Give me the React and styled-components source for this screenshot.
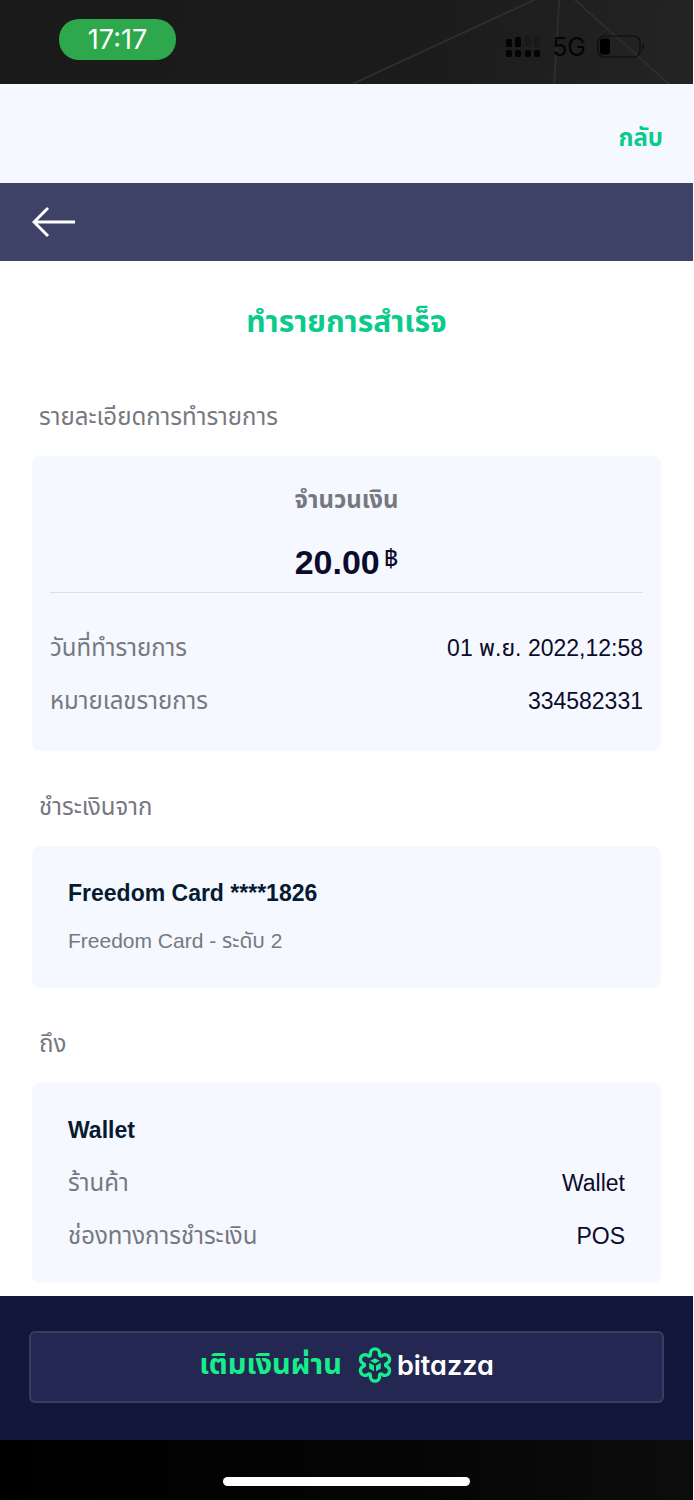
import React from "react";
import styled, { createGlobalStyle } from "styled-components";

const latin = `"Liberation Sans"`;
const thai = `"Noto Sans Thai", "Noto Sans Thai UI", "Loma", "Noto Sans"`;

const GlobalStyle = createGlobalStyle`
  * { box-sizing: border-box; }
  body {
    margin: 0;
    background: #fff;
    color: #0b0b2b;
    font-family: ${latin}, ${thai}, sans-serif;
    font-size: 23px;
    line-height: 32px;
  }
  h1, h2, h3, p, dl, dd { margin: 0; }
`;

const Page = styled.div`
  min-height: 100vh;
  display: flex;
  flex-direction: column;
  border-right: 1px solid #fff;
`;

const StatusBar = styled.header`
  position: relative;
  height: 84px;
  padding: 0 48px 6px 59px;
  display: flex;
  align-items: center;
  justify-content: space-between;
  background: linear-gradient(100deg, #1a1a1a 0%, #1b1b1b 60%, #242424 100%);
`;

const Backdrop = styled.svg`
  position: absolute;
  inset: 0;
  width: 100%;
  height: 100%;
`;

const Time = styled.time`
  position: relative;
  width: 117px;
  height: 41px;
  border-radius: 20px;
  background: #2ea84c;
  color: #fff;
  font-family: Inter, sans-serif;
  font-size: 27px;
  line-height: 41px;
  text-align: center;
`;

const Signals = styled.div`
  position: relative;
  display: flex;
  align-items: center;
  gap: 11px;
  padding-top: 16px;
  color: #040404;
  font-family: Inter, sans-serif;
  font-size: 25px;
`;

const TopBar = styled.div`
  height: 99px;
  padding: 8px 30px 0;
  display: flex;
  align-items: center;
  justify-content: flex-end;
  background: #f5f8ff;
`;

const CloseLink = styled.a`
  color: #0acb8c;
  font-size: 24px;
  font-weight: 700;
  text-decoration: none;
`;

const NavBar = styled.nav`
  height: 78px;
  padding: 0 32px;
  display: flex;
  align-items: center;
  background: #3d4266;
`;

const BackButton = styled.button`
  display: flex;
  padding: 0;
  border: 0;
  background: none;
  color: #fff;
`;

const Content = styled.main`
  flex: 1;
  padding: 39px 32px 13px;
`;

const Title = styled.h1`
  margin-bottom: 57px;
  color: #0acb8c;
  font-size: 30px;
  line-height: 44px;
  text-align: center;
`;

const Section = styled.section`
  margin-top: 40px;
`;

const Label = styled.h2`
  margin: 0 7px 23px;
  color: #77787f;
  font-size: 24px;
  font-weight: 400;
`;

const Card = styled.div`
  padding: ${({ $wide }) => ($wide ? "28px 18px 34px" : "31px 36px")};
  border-radius: 8px;
  background: #f5f8ff;
`;

const Caption = styled.h3`
  color: #77787f;
  font-size: 24px;
  text-align: center;
`;

const Amount = styled.p`
  display: flex;
  justify-content: center;
  gap: 4px;
  padding: 24px 0 8px;
  border-bottom: 1px solid #dcdfe6;
  margin-bottom: 39px;
  font-size: 34px;
  font-weight: 700;
  line-height: 44px;
`;

const Currency = styled.span`
  font-size: 25px;
  font-weight: 400;
  line-height: 36px;
`;

const Rows = styled.dl`
  display: flex;
  flex-direction: column;
  gap: 21px;
`;

const Row = styled.div`
  display: flex;
  justify-content: space-between;

  dt { color: #77787f; font-size: 24px; }
`;

const Name = styled.h3`
  margin-bottom: ${({ $gap }) => $gap}px;
  color: #061a30;
  font-size: 23px;
`;

const Detail = styled.p`
  color: #77787f;
  font-size: 21px;
`;

const Footer = styled.footer`
  padding: 35px 29px 37px;
  background: #11163a;
`;

const TopUpButton = styled.button`
  width: 100%;
  height: 72px;
  padding: 0 0 4px;
  display: flex;
  align-items: center;
  justify-content: center;
  border: 2px solid #393b63;
  border-radius: 6px;
  background: #242752;
  color: #16ee8c;
  font-family: ${latin}, ${thai}, sans-serif;
  font-size: 29px;
  font-weight: 700;
`;

const Logo = styled.span`
  display: flex;
  align-items: center;
  gap: 5px;
  margin-left: 16px;
  color: #fff;
  font-family: Inter, sans-serif;
  font-size: 27px;
  font-weight: 600;
  font-feature-settings: "cv11";
`;

const HomeArea = styled.div`
  height: 60px;
  padding-top: 37px;
  background: linear-gradient(90deg, #000 0%, #050505 60%, #0d0d0d 100%);
`;

const HomeBar = styled.div`
  width: 247px;
  height: 9px;
  margin: 0 auto;
  border-radius: 5px;
  background: #fff;
`;

const SignalIcon = () => (
  <svg width="36" height="22" viewBox="0 0 36 22" fill="currentColor" aria-label="signal">
    <rect x="1" y="3" width="6" height="8" rx="1.5" />
    <rect x="10" y="1" width="6" height="10" rx="1.5" />
    <rect x="20" y="0" width="6" height="11" rx="1.5" opacity=".2" />
    <rect x="29" y="0" width="6" height="11" rx="1.5" opacity=".2" />
    {[1, 10, 20, 29].map((x) => (
      <rect key={x} x={x} y="14" width="6" height="7" rx="2" />
    ))}
  </svg>
);

const BatteryIcon = () => (
  <svg width="48" height="24" viewBox="0 0 48 24" aria-label="battery">
    <rect x="1" y="1" width="42" height="21" rx="6" fill="none" stroke="#0d0d0d" strokeWidth="1.2" />
    <rect x="3" y="3.500" width="10" height="16" rx="3" fill="#000" />
    <path d="M45.500 8c2 1 2 6 0 7z" fill="#0b0b0b" />
  </svg>
);

const ArrowIcon = () => (
  <svg width="44" height="32" viewBox="0 0 44 32" fill="none" stroke="currentColor" strokeWidth="3">
    <path d="M43 16H2M16 2L2 16l14 14" />
  </svg>
);

const petals = [0, 60, 120, 180, 240, 300];

const FlowerIcon = () => (
  <svg width="34" height="36" viewBox="-17 -18 34 36" fill="none" stroke="#16ee8c" strokeWidth="3.4" strokeLinecap="round">
    {petals.map((angle) => (
      <path
        key={angle}
        transform={`rotate(${angle})`}
        d="M-5.300 -9.200C-4.300 -9.700 -4.600 -10.600 -4.600 -11.500A4.600 4.600 0 0 1 4.600 -11.500C4.600 -10.600 4.300 -9.700 5.300 -9.200"
      />
    ))}
    <g fill="#16ee8c" stroke="none">
      <path d="M0 -6.800L4.800 -4.200L0 -1.600L-4.800 -4.200Z" />
      <path d="M-5.800 -2.200L-1 0.500V6.200L-5.800 3.500Z" />
      <path d="M5.800 -2.200L1 0.500V6.200L5.800 3.500Z" />
    </g>
  </svg>
);

const DetailRow = ({ label, value }) => (
  <Row>
    <dt>{label}</dt>
    <dd>{value}</dd>
  </Row>
);

export default function App() {
  return (
    <>
      <GlobalStyle />
      <Page>
        <StatusBar>
          <Backdrop viewBox="0 0 694 84" preserveAspectRatio="none" fill="none" stroke="#2d2d2d" strokeWidth="2">
            <path d="M535 0L353 84M576 0L670 84M560 0L555 84" />
          </Backdrop>
          <Time>17:17</Time>
          <Signals>
            <SignalIcon />
            <span>5G</span>
            <BatteryIcon />
          </Signals>
        </StatusBar>
        <TopBar>
          <CloseLink href="#">กลับ</CloseLink>
        </TopBar>
        <NavBar>
          <BackButton aria-label="ย้อนกลับ">
            <ArrowIcon />
          </BackButton>
        </NavBar>
        <Content>
          <Title>ทำรายการสำเร็จ</Title>
          <Section>
            <Label>รายละเอียดการทำรายการ</Label>
            <Card $wide>
              <Caption>จำนวนเงิน</Caption>
              <Amount>
                20.00<Currency>฿</Currency>
              </Amount>
              <Rows>
                <DetailRow label="วันที่ทำรายการ" value="01 พ.ย. 2022,12:58" />
                <DetailRow label="หมายเลขรายการ" value="334582331" />
              </Rows>
            </Card>
          </Section>
          <Section>
            <Label>ชำระเงินจาก</Label>
            <Card>
              <Name $gap={16}>Freedom Card ****1826</Name>
              <Detail>Freedom Card - ระดับ 2</Detail>
            </Card>
          </Section>
          <Section>
            <Label>ถึง</Label>
            <Card>
              <Name $gap={21}>Wallet</Name>
              <Rows>
                <DetailRow label="ร้านค้า" value="Wallet" />
                <DetailRow label="ช่องทางการชำระเงิน" value="POS" />
              </Rows>
            </Card>
          </Section>
        </Content>
        <Footer>
          <TopUpButton>
            เติมเงินผ่าน
            <Logo>
              <FlowerIcon />
              bitazza
            </Logo>
          </TopUpButton>
        </Footer>
        <HomeArea>
          <HomeBar />
        </HomeArea>
      </Page>
    </>
  );
}
